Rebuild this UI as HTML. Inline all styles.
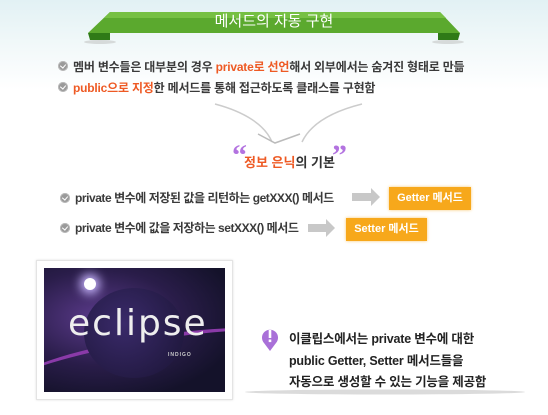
<!DOCTYPE html>
<html><head><meta charset="utf-8"><style>
*{margin:0;padding:0;box-sizing:border-box}
body{width:548px;height:415px;overflow:hidden;position:relative;font-family:"Liberation Sans","Noto Sans CJK KR",sans-serif;background:linear-gradient(#e2f1f4 0,#f3f9fa 50px,#fff 90px);color:#333}
.a{position:absolute;white-space:nowrap}
.t{font-size:12px;font-weight:bold;color:#3a3a3a;letter-spacing:-0.2px}
.r{letter-spacing:-0.45px}
.o{color:#ee5a24}
.b{position:absolute;width:10px;height:10px;border-radius:50%;background:#9a9a9a;box-shadow:inset 0 0 0 1px #bbb}
.b:after{content:"";position:absolute;left:2.5px;top:2px;width:3px;height:4px;border:solid #fff;border-width:0 1.5px 1.5px 0;transform:rotate(40deg)}
.box{position:absolute;background:#f7a81b;color:#fff;font-size:11px;font-weight:bold;text-align:center;box-shadow:0 0 3px #f9c874}
.arr{position:absolute;height:8px;background:#c8c8c8}
.arr:after{content:"";position:absolute;right:-8px;top:-5px;border-left:9px solid #c8c8c8;border-top:9px solid transparent;border-bottom:9px solid transparent}
</style></head><body>
<svg class="a" style="left:0;top:0" width="548" height="415">
<polygon points="88,33 110,12 440,12 460,33" fill="#5ba92e"/>
<polygon points="110,12 440,12 446,18 104,18" fill="#76c043"/>
<polygon points="88,33 110,33 110,40 90,40" fill="#2f7a17"/>
<polygon points="438,33 460,33 458,40 438,40" fill="#2f7a17"/>
<ellipse cx="100" cy="42" rx="16" ry="2" fill="#bbb" opacity=".5"/>
<ellipse cx="448" cy="42" rx="16" ry="2" fill="#bbb" opacity=".5"/>
<path d="M215,104 C245,112 265,125 272,142" stroke="#ccc" stroke-width="1.5" fill="none"/>
<path d="M362,104 C330,112 310,125 302,142" stroke="#ccc" stroke-width="1.5" fill="none"/>
<path d="M258,134 L275,143 L300,134" stroke="#bbb" stroke-width="1.5" fill="none"/>
<ellipse cx="385" cy="392" rx="140" ry="2.5" fill="#ccc" opacity=".7"/>
</svg>
<div class="a" style="left:0;width:548px;top:11px;text-align:center;color:#fff;font-size:15px;line-height:22px">메서드의 자동 구현</div>
<div class="b" style="left:58px;top:61px"></div>
<div class="a t" style="left:73px;top:58px">멤버 변수들은 대부분의 경우 <span class="o">private로 선언</span>해서 외부에서는 숨겨진 형태로 만듦</div>
<div class="b" style="left:58px;top:82px"></div>
<div class="a t" style="left:73px;top:79px"><span class="o">public으로 지정</span>한 메서드를 통해 접근하도록 클래스를 구현함</div>
<div class="a" style="left:232px;top:139px;font-size:30px;color:#b373e0;font-weight:bold;font-family:'Liberation Serif',serif">“</div>
<div class="a" style="left:332px;top:139px;font-size:30px;color:#b373e0;font-weight:bold;font-family:'Liberation Serif',serif">”</div>
<div class="a" style="left:244px;top:152px;font-size:13px;font-weight:bold;color:#333"><span class="o">정보 은닉</span>의 기본</div>
<div class="b" style="left:60px;top:193px"></div>
<div class="a t r" style="left:75px;top:189px">private 변수에 저장된 값을 리턴하는 getXXX() 메서드</div>
<div class="arr" style="left:352px;top:193px;width:20px"></div>
<div class="box" style="left:389px;top:187px;width:82px;height:23px;line-height:23px">Getter 메서드</div>
<div class="b" style="left:60px;top:223px"></div>
<div class="a t r" style="left:75px;top:219px">private 변수에 값을 저장하는 setXXX() 메서드</div>
<div class="arr" style="left:308px;top:224px;width:19px"></div>
<div class="box" style="left:346px;top:218px;width:81px;height:23px;line-height:23px">Setter 메서드</div>
<div class="a" style="left:36px;top:260px;width:197px;height:140px;background:#fff;border:1px solid #e4e4e4;box-shadow:0 0 2px #ddd"></div>
<div class="a" style="left:44px;top:268px;width:181px;height:124px;background:radial-gradient(ellipse at 30% 40%,#5a3a8a 0,#2a1d4a 45%,#14122a 80%);overflow:hidden">
<div class="a" style="left:-30px;top:70px;width:260px;height:40px;border-radius:50%;border-top:4px solid #8a3aa8;transform:rotate(-10deg)"></div>
<div class="a" style="left:40px;top:20px;width:100px;height:90px;border-radius:50%;background:radial-gradient(circle at 40% 40%,#3a2a6a,#1a1434)"></div>
<div class="a" style="left:40px;top:10px;width:12px;height:12px;border-radius:50%;background:#fff;box-shadow:0 0 10px 4px #c9b6ff"></div>
<div class="a" style="left:24px;top:35px;font-size:36px;color:#eee;letter-spacing:2px;font-family:'DejaVu Sans',sans-serif">eclipse</div>
<div class="a" style="left:124px;top:84px;font-size:5px;color:#ccc;font-weight:bold;letter-spacing:1px">INDIGO</div>
</div>
<svg class="a" style="left:261px;top:326px" width="18" height="26"><path d="M9,25 L3,17 A8,8 0 1 1 15,17 Z" fill="#a970d8"/><rect x="7.7" y="4" width="2.6" height="8" fill="#fff"/><rect x="7.7" y="13.5" width="2.6" height="2.6" fill="#fff"/></svg>
<div class="a t" style="left:289px;top:329px;line-height:21.5px;font-size:12.5px;color:#222">이클립스에서는 private 변수에 대한<br>public Getter, Setter 메서드들을<br>자동으로 생성할 수 있는 기능을 제공함</div>
</body></html>
